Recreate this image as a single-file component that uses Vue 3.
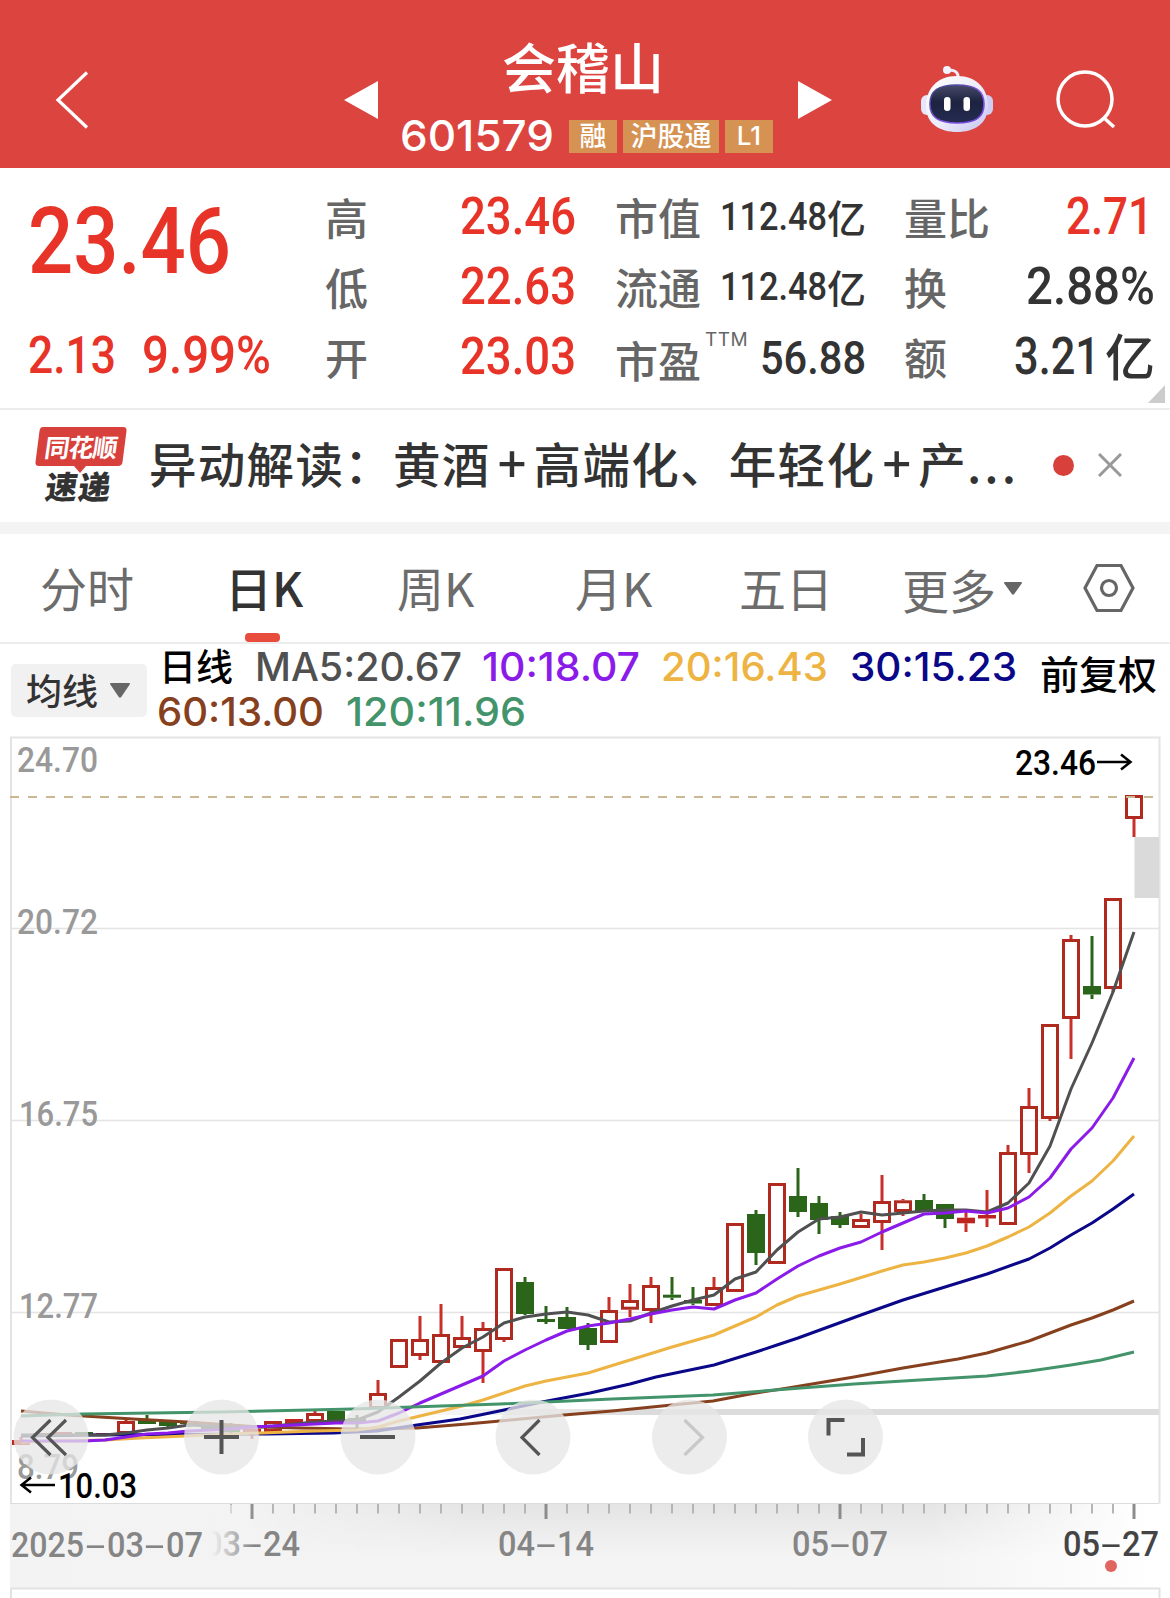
<script setup>
import { h } from 'vue'

// Single-line text fitted to a fixed width; the box is exactly one cap height tall.
const Fit = (props) => {
  const cap = props.font === 'inter' ? 0.727 : 0.711
  const height = Math.round(props.size * cap)
  return h('svg', { class: ['fit', props.font || 'din'], width: props.w, height }, [
    h('text', { x: 0, y: height, 'font-size': props.size, textLength: props.w, lengthAdjust: 'spacingAndGlyphs' }, props.t),
  ])
}
Fit.props = ['t', 'w', 'size', 'font']

const tabs = [
  { t: '分时' },
  { t: '日K', active: true },
  { t: '周K' },
  { t: '月K' },
  { t: '五日' },
]

const averages = [
  [
    { t: 'MA5:20.67', w: 207, gap: 22, c: '#505050' },
    { t: '10:18.07', w: 158, gap: 20, c: '#8a1be8' },
    { t: '20:16.43', w: 167, gap: 21, c: '#edb343' },
    { t: '30:15.23', w: 167, gap: 22, c: '#0a0788' },
  ],
  [
    { t: '60:13.00', w: 167, gap: 0, c: '#86401d' },
    { t: '120:11.96', w: 180, gap: 22, c: '#43946b' },
  ],
]

const cx = (i) => 21 + 21 * i

// [index, rising, high, bodyTop, bodyBottom, low]
const candles = [
  [0, 1, 1437, 1440, 1445, 1445], [1, 1, 1433, 1433, 1436, 1436], [2, 1, 1432, 1432, 1434, 1434],
  [3, 0, 1432, 1432, 1434, 1434], [4, 1, 1433, 1433, 1434, 1434], [5, 1, 1420, 1421, 1434, 1434],
  [6, 0, 1415, 1419, 1424, 1424], [7, 0, 1422, 1422, 1426, 1427], [8, 0, 1421, 1421, 1424, 1427],
  [9, 0, 1423, 1425, 1429, 1431], [10, 0, 1423, 1425, 1432, 1433], [11, 1, 1427, 1429, 1434, 1439],
  [12, 1, 1421, 1421, 1432, 1434], [13, 1, 1419, 1419, 1424, 1424], [14, 1, 1411, 1413, 1422, 1423],
  [15, 0, 1411, 1411, 1420, 1420], [16, 0, 1415, 1418, 1423, 1428], [17, 1, 1380, 1393, 1409, 1409],
  [18, 1, 1339, 1339, 1368, 1368], [19, 1, 1316, 1339, 1356, 1360], [20, 1, 1304, 1334, 1363, 1363],
  [21, 1, 1316, 1337, 1348, 1348], [22, 1, 1322, 1328, 1352, 1383], [23, 1, 1268, 1268, 1340, 1342],
  [24, 0, 1277, 1282, 1314, 1315], [25, 0, 1306, 1319, 1322, 1324], [26, 0, 1307, 1317, 1329, 1329],
  [27, 0, 1323, 1328, 1345, 1350], [28, 1, 1297, 1310, 1343, 1343], [29, 1, 1284, 1300, 1309.7, 1317],
  [30, 1, 1277, 1285, 1311, 1323], [31, 0, 1277, 1294.7, 1297.7, 1300], [32, 0, 1287, 1300, 1303.5, 1305],
  [33, 1, 1277, 1287, 1306, 1306], [34, 1, 1223, 1223, 1292, 1292], [35, 0, 1210, 1214, 1253, 1265],
  [36, 1, 1183, 1183, 1264, 1264], [37, 0, 1168, 1196, 1212, 1217], [38, 0, 1196, 1203, 1220, 1234],
  [39, 0, 1212, 1216, 1225, 1228], [40, 1, 1214, 1219, 1228, 1228], [41, 1, 1175, 1201, 1223, 1250],
  [42, 1, 1199, 1200.3, 1212, 1216], [43, 0, 1194, 1200, 1211, 1211], [44, 0, 1204, 1204, 1219, 1228],
  [45, 1, 1212, 1217.7, 1223.3, 1232], [46, 1, 1190, 1215, 1218.5, 1227], [47, 1, 1145, 1152, 1225, 1225],
  [48, 1, 1088, 1106, 1155, 1173], [49, 1, 1024, 1024, 1119, 1121], [50, 1, 935, 939, 1019, 1059],
  [51, 0, 936, 986, 994.5, 999], [52, 1, 898, 898, 989, 992], [53, 1, 795, 795, 819, 837],
].map(([i, up, hi, top, bot, lo]) => ({ x: cx(i), up, hi, top, bot, lo, hollow: up && bot - top > 7 }))

const fromRight = (ys) => ys.map((y, k) => `${1134 - 21 * k},${y}`).join(' ')
const lines = [
  { c: '#86401d', p: '21,1411 67,1415 133,1419 187,1422 260,1427 300,1428 350,1429 378,1429 417,1428 467,1424 500,1421 564,1415 612,1411 672,1405 713,1401 750,1394 788,1388 854,1377 903,1368 958,1359 987,1353 1029,1341 1050,1333 1071,1325 1092,1318 1113,1310 1134,1301' },
  { c: '#0a0788', p: '21,1436 90,1435 267,1434 333,1433 377,1431 417,1425 460,1419 480,1415 504,1410 542,1402 590,1393 630,1384 656,1377 714,1365 756,1352 777,1345 798,1338 861,1315 903,1300 945,1287 987,1274 1029,1259 1050,1248 1071,1235 1092,1223 1113,1209 1134,1194' },
  { c: '#edb343', p: '21,1442 105,1440 140,1438 231,1434 315,1431 357,1430 378,1427 399,1421 420,1416 441,1411 462,1406 483,1400 504,1393 525,1386 546,1381 588,1373 630,1360 672,1347 714,1335 735,1326 756,1317 777,1305 798,1296 840,1284 882,1271 903,1265 924,1262 945,1258 966,1253 987,1246 1008,1237 1029,1227 1050,1213 1071,1196 1092,1181 1113,1161 1134,1136' },
  { c: '#505050', p: fromRight([932, 992, 1043, 1089, 1146, 1183, 1203, 1212, 1210, 1210, 1211, 1213, 1215, 1212, 1217, 1219, 1232, 1250, 1272, 1279, 1295, 1300, 1306, 1313, 1321, 1322, 1315, 1312, 1314, 1317, 1323, 1337, 1348, 1363, 1381, 1397, 1412, 1420, 1421, 1422, 1424, 1426, 1427, 1427, 1426, 1425, 1428, 1430, 1433, 1435, 1435, 1435, 1435, 1435]) },
  { c: '#8a1be8', p: fromRight([1058, 1098, 1128, 1149, 1178, 1197, 1208, 1213, 1211, 1213, 1214, 1223, 1232, 1242, 1248, 1256, 1266, 1279, 1293, 1300, 1309, 1307, 1310, 1314, 1319, 1323, 1326, 1331, 1340, 1350, 1361, 1376, 1385, 1394, 1403, 1413, 1421, 1423, 1423, 1424, 1425, 1426, 1427, 1429, 1430, 1431, 1433, 1434, 1437, 1440, 1441, 1441, 1441, 1441]) },
  { c: '#43946b', p: '21,1416 83,1414 220,1412 353,1409 500,1404 612,1399 713,1395 788,1389 854,1384 920,1380 987,1376 1030,1371 1071,1365 1101,1360 1134,1352' },
]

const ticks = Array.from({ length: 44 }, (_, k) => ({ x: cx(10 + k), major: (k - 1) % 14 === 0 }))

const priceLabels = [
  { t: '24.70', x: 17, y: 772, w: 81 },
  { t: '20.72', x: 17, y: 934, w: 81 },
  { t: '16.75', x: 19, y: 1125.5, w: 79 },
  { t: '12.77', x: 19, y: 1317.5, w: 79 },
  { t: '8.79', x: 17, y: 1479, w: 62 },
]
const dates = [
  { a: '03', b: '24', x: 204, s: 'mid' },
  { a: '04', b: '14', x: 498, s: 'mid' },
  { a: '05', b: '07', x: 792, s: 'mid' },
  { a: '05', b: '27', x: 1063, s: 'now' },
]
</script>

<template>
  <div class="page">
    <header class="top">
      <svg class="back" width="34" height="60" viewBox="0 0 34 60"><path d="M32 2.500 3 30l29 27.500" /></svg>
      <svg class="tri prev" width="34" height="38" viewBox="0 0 34 38"><path d="M34 0v38L0 19z" /></svg>
      <div class="stock">
        <h1>会稽山</h1>
        <div class="code">
          <Fit t="601579" :w="154" :size="43" font="inter" />
          <span class="tag t1">融</span><span class="tag t3">沪股通</span><span class="tag tl">L1</span>
        </div>
      </div>
      <svg class="tri next" width="34" height="38" viewBox="0 0 34 38"><path d="M0 0v38l34-19z" /></svg>
      <svg class="robot" width="74" height="68" viewBox="920 65 74 68">
        <defs>
          <linearGradient id="shell" x1="0" y1="0" x2="1" y2="1"><stop offset="0" stop-color="#fff" /><stop offset=".55" stop-color="#ececfb" /><stop offset="1" stop-color="#c5c2ef" /></linearGradient>
          <linearGradient id="visor" x1="0" y1="0" x2="0" y2="1"><stop offset="0" stop-color="#474b68" /><stop offset=".45" stop-color="#1c2240" /><stop offset="1" stop-color="#252c50" /></linearGradient>
          <linearGradient id="rim" x1="0" y1="0" x2="1" y2="1"><stop offset="0" stop-color="#35407c" /><stop offset=".6" stop-color="#8255e0" /><stop offset="1" stop-color="#6840d8" /></linearGradient>
        </defs>
        <path d="M947 71c7-2 12 1 11 8" fill="none" stroke="#eeeefa" stroke-width="3" />
        <circle cx="947" cy="70" r="4" fill="#f3f2ff" />
        <rect x="921" y="95" width="12" height="20" rx="6" fill="#e7e6fa" />
        <rect x="981" y="95" width="12" height="20" rx="6" fill="#cfcdf4" />
        <path d="M957 76c20 0 31 13 31 30 0 18-14 26-31 26s-31-8-31-26c0-17 11-30 31-30z" fill="url(#shell)" />
        <path d="M957 85c19 0 27 6 27 19s-8 19-27 19-27-6-27-19 8-19 27-19z" fill="url(#visor)" stroke="url(#rim)" stroke-width="1.6" />
        <rect x="944" y="97" width="6.5" height="14" rx="3.2" fill="#fff" />
        <rect x="963.5" y="97" width="6.5" height="14" rx="3.2" fill="#fff" />
      </svg>
      <svg class="search" width="62" height="62" viewBox="0 0 62 62"><circle cx="31" cy="31" r="27" /><path d="m49 49 11 10" /></svg>
    </header>

    <section class="quote">
      <div class="price">
        <Fit t="23.46" :w="203" :size="93" />
        <div class="delta"><Fit t="2.13" :w="88" :size="51" /><Fit t="9.99%" :w="129" :size="51" /></div>
      </div>
      <div class="col b">
        <div class="row"><span>高</span><Fit class="red" t="23.46" :w="116" :size="51" /></div>
        <div class="row"><span>低</span><Fit class="red" t="22.63" :w="116" :size="51" /></div>
        <div class="row"><span>开</span><Fit class="red" t="23.03" :w="116" :size="51" /></div>
      </div>
      <div class="col c">
        <div class="row"><span>市值</span><div class="unit"><Fit t="112.48" :w="107" :size="38.500" /><i>亿</i></div></div>
        <div class="row"><span>流通</span><div class="unit"><Fit t="112.48" :w="107" :size="38.500" /><i>亿</i></div></div>
        <div class="row pe"><span>市盈<sup>TTM</sup></span><Fit t="56.88" :w="106" :size="46" /></div>
      </div>
      <div class="col d">
        <div class="row"><span>量比</span><Fit class="red inset" t="2.71" :w="87" :size="51" /></div>
        <div class="row"><span>换</span><Fit t="2.88%" :w="129" :size="51" /></div>
        <div class="row"><span>额</span><div class="unit big"><Fit t="3.21" :w="86" :size="51" /><i>亿</i></div></div>
      </div>
      <svg class="corner" width="17" height="18" viewBox="0 0 17 18"><path d="M17 0v18H0z" /></svg>
    </section>

    <section class="news">
      <div class="logo">
        <svg width="92" height="46" viewBox="0 0 92 46"><path d="M8 0h80q4 0 3.500 4l-4 31q-.5 4-4.500 4H51l-6 7-6-7H4q-4 0-3.500-4l4-31Q5 0 8 0z" /></svg>
        <b class="l1">同花顺</b><b class="l2">速递</b>
      </div>
      <p>异动解读：黄酒<em>+</em>高端化、年轻化<em>+</em>产<s>...</s></p>
      <i class="dot"></i>
      <svg class="close" width="24" height="24" viewBox="0 0 24 24"><path d="m1 1 22 22M23 1 1 23" /></svg>
    </section>

    <nav class="tabs">
      <div v-for="t in tabs" :key="t.t" class="tab" :class="{ active: t.active }">{{ t.t }}</div>
      <div class="tab more">更多<svg width="18" height="13" viewBox="0 0 18 13"><path d="M1 0h16q1.500 0 .7 1.500l-7.500 10.500q-1.200 1.300-2.400 0L.3 1.500Q-.5 0 1 0z" /></svg></div>
      <svg class="gear" width="52" height="52" viewBox="0 0 52 52"><path d="M14 3.500h24L50 26 38 48.500H14L2 26z" /><circle cx="26" cy="26" r="7.500" /></svg>
    </nav>

    <section class="ma">
      <div class="pick"><span>均线</span><svg width="20" height="15" viewBox="0 0 20 15"><path d="M1 0h18q1.500 0 .7 1.500l-8.500 12.500q-1.200 1.300-2.400 0L.3 1.500Q-.5 0 1 0z" /></svg></div>
      <div class="legend">
        <div v-for="(row, r) in averages" :key="r" class="lrow">
          <b v-if="r === 0">日线</b>
          <Fit v-for="a in row" :key="a.t" :t="a.t" :w="a.w" :size="39" font="inter" :style="{ fill: a.c, marginLeft: a.gap + 'px' }" />
        </div>
      </div>
      <b class="adj">前复权</b>
    </section>

    <svg class="chart" width="1170" height="862" viewBox="0 736 1170 862">
      <defs>
        <linearGradient id="band" x1="0" x2="1"><stop offset="0" stop-color="#f3f3f3" /><stop offset=".8" stop-color="#f4f4f4" /><stop offset="1" stop-color="#fff" /></linearGradient>
        <linearGradient id="shade" x1="0" y1="0" x2="0" y2="1"><stop offset="0" stop-color="#000" stop-opacity=".06" /><stop offset="1" stop-color="#000" stop-opacity="0" /></linearGradient>
        <linearGradient id="sides" x1="0" x2="1"><stop offset=".2" stop-color="#000" /><stop offset=".4" stop-color="#fff" /><stop offset=".8" stop-color="#fff" /><stop offset=".98" stop-color="#000" /></linearGradient>
        <mask id="sideMask"><rect x="10" y="1504" width="1149" height="84" fill="url(#sides)" /></mask>
        <linearGradient id="fade" x1="0" x2="1"><stop offset=".15" stop-color="#f3f3f3" /><stop offset="1" stop-color="#f3f3f3" stop-opacity="0" /></linearGradient>
        <linearGradient id="base" gradientUnits="userSpaceOnUse" x1="370" y1="0" x2="640" y2="0"><stop offset="0" stop-color="#dcdcdc" stop-opacity="0" /><stop offset="1" stop-color="#dcdcdc" /></linearGradient>
      </defs>

      <g stroke="#e4e4e4" stroke-width="2" fill="none">
        <path d="M11 1503.500V737.500h1148.500v766" />
        <path d="M11 928.500h1148M11 1120.500h1148M11 1312.500h1148" stroke-width="1.500" />
      </g>
      <rect x="370" y="1409" width="789" height="6" fill="url(#base)" />
      <rect x="1134.500" y="837" width="24.500" height="61" fill="#dadada" />

      <g class="axis"><text v-for="p in priceLabels" :key="p.t" :x="p.x" :y="p.y" :textLength="p.w" lengthAdjust="spacingAndGlyphs">{{ p.t }}</text></g>

      <g v-for="c in candles" :key="c.x" :class="c.up ? 'up' : 'down'">
        <path :d="`M${c.x} ${c.hi}V${c.top}M${c.x} ${c.bot}V${c.lo}`" />
        <rect v-if="c.hollow" :x="c.x - 7.500" :y="c.top + 1.500" width="15" :height="c.bot - c.top - 3" />
        <rect v-else class="solid" :x="c.x - 9" :y="c.top" width="18" :height="c.bot - c.top" />
      </g>
      <path d="M10 797H1154" stroke="#cbb792" stroke-width="2" stroke-dasharray="9 9" />
      <polyline v-for="l in lines" :key="l.c" :points="l.p" :stroke="l.c" fill="none" stroke-width="3" stroke-linejoin="round" />

      <g fill="#e6e6e6" fill-opacity=".77">
        <circle v-for="x in [51, 221.500, 378, 533, 689.500, 845.500]" :key="x" :cx="x" cy="1437" r="37.500" />
      </g>
      <g class="icons">
        <path d="M50.500 1420 32.500 1437.500l18 17.500M66 1420l-18 17.500L66 1455" />
        <path d="M204 1437h35M221.500 1420v34M360 1437h35" stroke-width="4" />
        <path d="m539.500 1420-17.500 17.500 17.500 17.500" />
        <path d="m684.500 1420 18 17.500-18 17.500" stroke="#c8c8c8" />
        <path d="M828.500 1435.500V1420h16M863 1438v16.500h-16" stroke-width="4" />
      </g>

      <g class="mark">
        <text x="1015" y="775" textLength="81" lengthAdjust="spacingAndGlyphs">23.46</text>
        <path d="M1097 762h33M1121 754.500l9.500 7.500-9.500 7.500" />
        <text x="58" y="1497.500" textLength="79" lengthAdjust="spacingAndGlyphs">10.03</text>
        <path d="M55 1485H22M31 1477.500l-9.500 7.500 9.500 7.500" />
      </g>

      <rect x="10" y="1504" width="1149" height="84" fill="url(#band)" />
      <rect x="10" y="1504" width="1149" height="52" fill="url(#shade)" mask="url(#sideMask)" />
      <path d="M10 1503.500h1149" stroke="#dcdcdc" stroke-width="1.200" />
      <path v-for="t in ticks" :key="t.x" :d="`M${t.x} 1504v${t.major ? 15 : 9.500}`" :stroke="t.major ? '#8c8c8c' : '#b5b5b5'" :stroke-width="t.major ? 3 : 2" />
      <g v-for="d in dates" :key="d.x" class="date" :class="d.s">
        <text :x="d.x" y="1556" textLength="37" lengthAdjust="spacingAndGlyphs">{{ d.a }}</text>
        <text class="dash" :x="d.x + 38" y="1556" textLength="20" lengthAdjust="spacingAndGlyphs">-</text>
        <text :x="d.x + 59" y="1556" textLength="37" lengthAdjust="spacingAndGlyphs">{{ d.b }}</text>
      </g>
      <rect x="204" y="1505" width="50" height="60" fill="url(#fade)" />
      <g class="date mid">
        <text x="11" y="1557" textLength="73" lengthAdjust="spacingAndGlyphs">2025</text>
        <text class="dash" x="85.500" y="1557" textLength="20" lengthAdjust="spacingAndGlyphs">-</text>
        <text x="107" y="1557" textLength="37" lengthAdjust="spacingAndGlyphs">03</text>
        <text class="dash" x="144.500" y="1557" textLength="20" lengthAdjust="spacingAndGlyphs">-</text>
        <text x="166" y="1557" textLength="37" lengthAdjust="spacingAndGlyphs">07</text>
      </g>
      <circle cx="1111" cy="1566" r="6" fill="#e0645f" />
      <path d="M11 1598v-9.500h1148.500v9.500" fill="#fff" stroke="#e2e2e2" stroke-width="2" />
    </svg>
  </div>
</template>

<style>
body { margin: 0; background: #fff; }
</style>

<style scoped>
.page { width: 1170px; height: 1598px; overflow: hidden; background: #fff; font-family: "Noto Sans CJK SC", sans-serif; color: #333; }
.fit { display: block; overflow: visible; flex: none; fill: currentColor; }
.fit.din { font-family: Roboto, sans-serif; font-weight: 500; }
.fit.inter { font-family: Inter, sans-serif; font-weight: 500; }

.top { height: 168px; background: #dc4440; color: #fff; display: flex; align-items: flex-start; box-sizing: border-box; padding-left: 55px; }
.top > svg { flex: none; }
.back { margin-top: 70px; fill: none; stroke: #fff; stroke-width: 3.2; }
.tri { margin-top: 81px; fill: #fff; }
.prev { margin-left: 255px; }
.stock { width: 420px; display: flex; flex-direction: column; }
.stock h1 { margin: 26px 0 0 124px; font-size: 54px; font-weight: 500; line-height: 80px; height: 80px; white-space: nowrap; }
.code { display: flex; margin: 14px 0 0 22px; align-items: center; height: 33px; }
.code .fit { margin-top: -2px; }
.tag { height: 33px; line-height: 29px; background: #d59252; font-size: 27px; font-weight: 500; text-align: center; flex: none; margin-right: 6px; }
.code .t1 { margin-left: 15px; }
.t1 { width: 48px; }
.t3 { width: 96px; }
.tl { width: 48px; font-family: Inter, sans-serif; font-size: 26px; line-height: 32px; }
.robot { margin: 65px 0 0 88px; }
.search { margin: 68px 0 0 60px; fill: none; stroke: #fff; stroke-width: 3.5; }

.quote { height: 240px; border-bottom: 2px solid #ececec; display: flex; position: relative; }
.price { width: 325px; box-sizing: border-box; padding: 39px 0 0 28px; color: #e83428; }
.delta { display: flex; justify-content: space-between; width: 243px; margin-top: 64px; }
.col { padding-top: 13px; }
.col.b { width: 251px; }
.col.c { width: 251px; margin-left: 39px; }
.col.d { width: 251px; margin-left: 38px; }
.row { height: 70px; display: flex; align-items: center; justify-content: space-between; font-size: 43px; font-weight: 500; color: #333; }
.row > span { color: #666; line-height: 64px; white-space: nowrap; position: relative; }
.red { color: #e83428; }
.inset { margin-right: 2px; }
.unit { display: flex; align-items: center; }
.unit i { font-style: normal; font-size: 39px; line-height: 50px; width: 39px; margin-top: -1px; }
.unit.big i { font-size: 50px; width: 50px; margin: -5px 0 0 5px; }
.pe > span { padding-top: 5px; }
.pe > .fit { margin-top: 3px; }
.pe sup { position: absolute; left: 90px; top: 4px; font: 400 19px/28px Inter, sans-serif; letter-spacing: .5px; }
.corner { position: absolute; right: 5px; bottom: 5px; fill: #ccc; }

.news { height: 112px; border-bottom: 12px solid #f4f4f4; display: flex; align-items: center; }
.logo { position: relative; width: 92px; height: 78px; margin-left: 35px; flex: none; text-align: center; }
.logo svg { position: absolute; left: 0; top: 0; fill: #d8403b; }
.logo b { position: absolute; left: 0; width: 92px; transform: skewX(-8deg); white-space: nowrap; }
.l1 { top: 1px; color: #fff; font-size: 25px; line-height: 36px; letter-spacing: -1px; }
.logo .l2 { top: 39px; left: -2px; font-size: 32px; line-height: 38px; color: #333; letter-spacing: 1px; font-weight: 900; }
.news p { margin: -7px 0 0 22px; width: 901px; font-size: 47.5px; letter-spacing: 1.3px; font-weight: 500; white-space: nowrap; line-height: 70px; }
.news em { display: inline-block; width: 43px; font-style: normal; text-align: center; letter-spacing: 0; font-size: 50px; line-height: 60px; }
.news s { text-decoration: none; letter-spacing: 3px; font-size: 48px; }
.dot { width: 21px; height: 21px; border-radius: 50%; background: #d8403b; margin: -1px 0 0 3px; flex: none; }
.close { margin: -2px 0 0 24px; stroke: #999; stroke-width: 3; flex: none; }

.tabs { height: 108px; border-bottom: 2px solid #ececec; display: flex; align-items: center; padding-left: 40px; }
.tab { position: relative; height: 108px; font-size: 47px; font-weight: 400; color: #6c6c6c; width: 185px; white-space: nowrap; line-height: 105px; flex: none; }
.tab:nth-child(2) { width: 172px; }
.tab:nth-child(3) { width: 178px; }
.tab:nth-child(4) { width: 164px; }
.tab:nth-child(5) { width: 163px; }
.tab.active { font-weight: 500; color: #333; }
.tab.active::after { content: ""; position: absolute; left: 20px; bottom: 0; width: 35px; height: 9px; border-radius: 4px; background: #e74c3d; }
.tab.more { width: 181px; display: flex; align-items: center; }
.more svg { fill: #666; margin-left: 8px; }
.gear { fill: none; stroke: #666; stroke-width: 3.2; }

.ma { height: 92px; display: flex; }
.pick { width: 136px; height: 53px; margin: 20px 0 0 11px; box-sizing: border-box; padding-left: 15px; border-radius: 5px; background: #f1f1f1; font-size: 36px; font-weight: 500; display: flex; align-items: center; flex: none; }
.pick span { line-height: 50px; margin-top: -3px; }
.pick svg { fill: #666; margin-left: 12px; }
.legend { margin-left: 10px; width: 883px; }
.legend .fit { font-weight: 550; }
.lrow { display: flex; align-items: center; height: 45px; }
.lrow b { font-size: 37px; font-weight: 500; color: #000; line-height: 44px; width: 74px; margin: -4px 0 0 2px; }
.adj { font-size: 39px; font-weight: 500; color: #000; line-height: 56px; white-space: nowrap; }

.chart { display: block; }
.axis text, .mark text, .date text { font-family: Roboto, sans-serif; font-size: 35px; font-weight: 500; }
.date .dash { font-weight: 400; }
.axis { fill: #999; }
.mark { fill: #000; }
.mark path { fill: none; stroke: #000; stroke-width: 2.5; }
.up path { stroke: #c9302a; stroke-width: 3; }
.up rect { fill: none; stroke: #b02a20; stroke-width: 3; }
.up .solid { fill: #bd2620; stroke: none; }
.down path { stroke: #2a6519; stroke-width: 3; }
.down .solid { fill: #2a6519; }
.icons { fill: none; stroke: #555; stroke-width: 3.2; }
.date.mid { fill: #858585; }
.date.now { fill: #444; }
</style>
